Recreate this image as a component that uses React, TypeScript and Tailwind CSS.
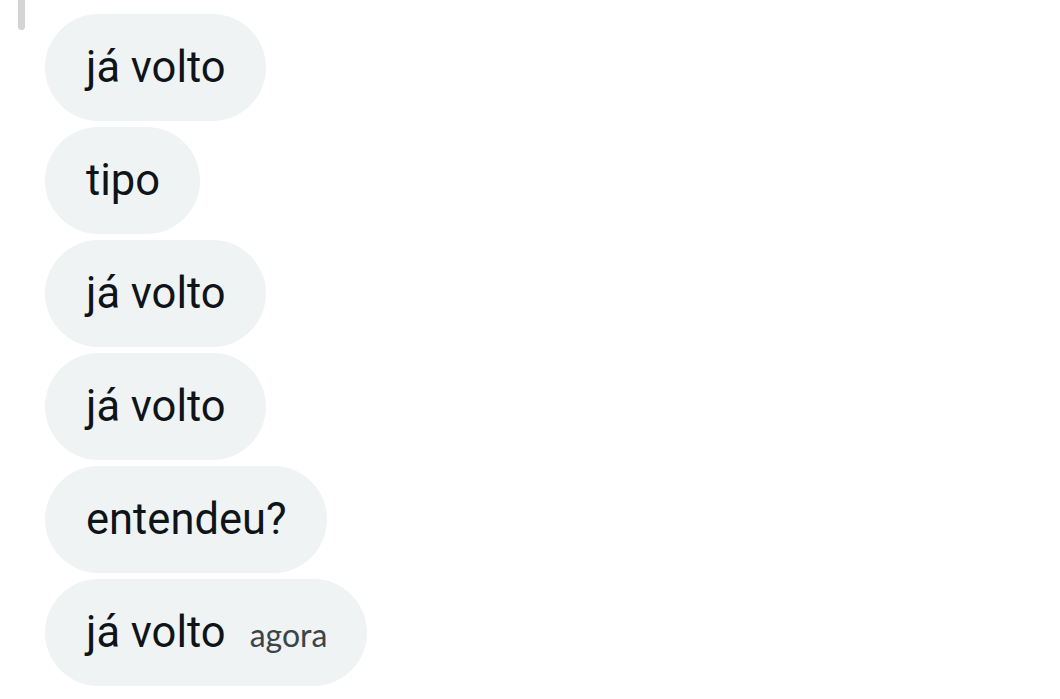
const messages = ["já volto", "tipo", "já volto", "já volto", "entendeu?", "já volto"];

export default function App() {
  return (
    <div className="relative h-[699px] w-[1060px] overflow-hidden bg-white font-['Roboto',sans-serif]">
      {/* scrollbar thumb */}
      <div className="absolute left-[18px] top-0 h-[30px] w-[7px] rounded-b-full bg-[#d4d4d4]" />

      <div className="flex flex-col items-start gap-[6px] pl-[45px] pt-[14px]">
        {messages.map((text, i) => {
          const last = i === messages.length - 1;
          return (
            <div
              key={i}
              className="flex h-[107px] items-baseline rounded-full bg-[#eff3f4] pl-[41px] pr-[40px] pt-[34px]"
            >
              <span className="text-[43.5px] leading-[40px] text-[#0f1419]">{text}</span>
              {last && (
                <span className="ml-[24px] font-['Lato',sans-serif] text-[32px] leading-none text-[#3b4449]">agora</span>
              )}
            </div>
          );
        })}
      </div>
    </div>
  );
}
